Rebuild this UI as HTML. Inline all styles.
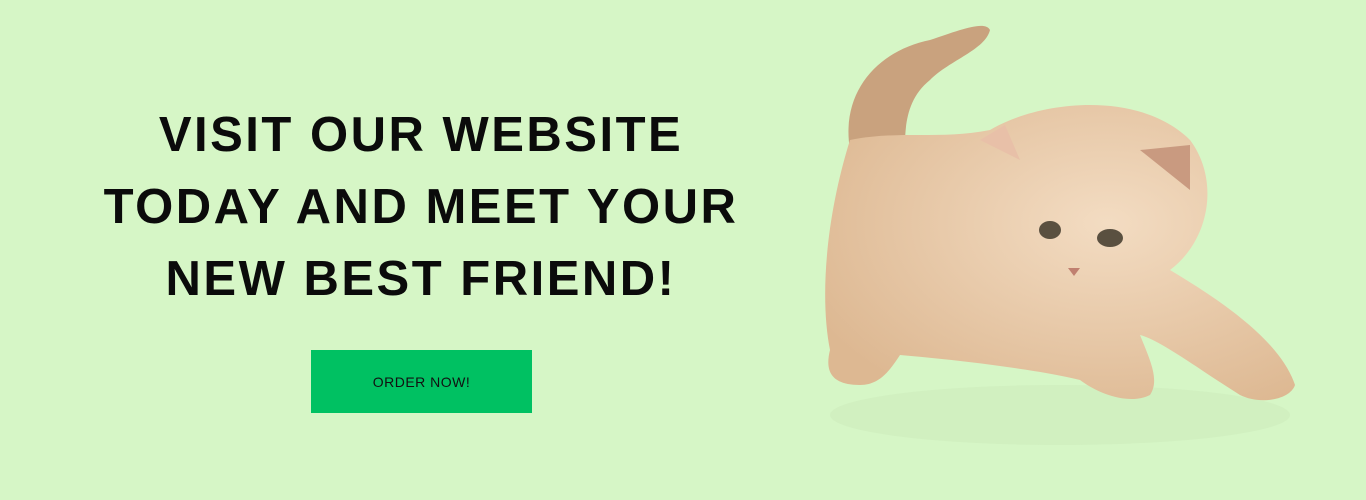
<!DOCTYPE html>
<html><head><style>
html,body{margin:0;padding:0}
body{width:1366px;height:500px;background:#d6f6c6;position:relative;overflow:hidden;font-family:"Liberation Sans",sans-serif}
h1{position:absolute;left:60px;width:722px;top:99px;margin:0;text-align:center;font-size:49px;line-height:72px;font-weight:700;color:#0b0b0b;letter-spacing:2.5px}
.btn{position:absolute;left:311px;top:350px;width:221px;height:63px;background:#00c162;color:#111;font-size:14px;display:flex;align-items:center;justify-content:center;letter-spacing:.5px}
</style></head><body>
<h1>VISIT OUR WEBSITE<br>TODAY AND MEET YOUR<br>NEW BEST FRIEND!</h1>
<div class="btn">ORDER NOW!</div>
<svg style="position:absolute;left:0;top:0" width="1366" height="500">
<defs><radialGradient id="g" cx="0.6" cy="0.4" r="0.7"><stop offset="0" stop-color="#f3dcc2"/><stop offset="1" stop-color="#ddb892"/></radialGradient></defs>
<ellipse cx="1060" cy="415" rx="230" ry="30" fill="#cdecbd" opacity=".6"/>
<path d="M850 150 C840 90 880 50 930 40 C960 30 985 20 990 30 C985 50 950 60 930 80 C905 100 905 130 905 150 Z" fill="#c9a27e"/>
<path d="M850 140 C900 130 940 140 990 130 C1040 100 1140 90 1190 140 C1220 180 1210 240 1170 270 C1220 300 1280 340 1295 385 C1290 400 1260 405 1240 395 C1200 370 1160 340 1140 335 C1150 360 1160 380 1150 395 C1130 405 1100 395 1080 380 C1040 370 960 360 900 355 C890 370 880 385 860 385 C830 385 825 370 830 350 C820 300 825 220 850 140 Z" fill="url(#g)"/>
<path d="M980 140 L1005 125 L1020 160 Z" fill="#e8c0a8"/>
<path d="M1140 150 L1190 145 L1190 190 Z" fill="#c99a80"/>
<ellipse cx="1050" cy="230" rx="11" ry="9" fill="#5a5040"/>
<ellipse cx="1110" cy="238" rx="13" ry="9" fill="#5a5040"/>
<path d="M1068 268 L1080 268 L1074 276 Z" fill="#c08070"/>
</svg>
</body></html>
